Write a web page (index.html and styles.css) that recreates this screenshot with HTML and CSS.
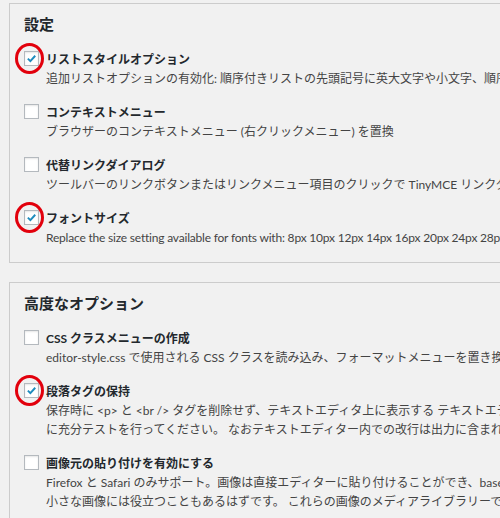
FILE: index.html
```html
<!DOCTYPE html>
<html lang="ja">
<head>
    <meta charset="UTF-8">
    <meta name="viewport" content="width=device-width, initial-scale=1.0">
    <title>TinyMCE Advanced 設定</title>
    <link rel="stylesheet" href="styles.css">
</head>
<body>
    <!-- 設定 -->
    <div class="box">
        <h2>設定</h2>

        <div class="option marked">
            <span class="check on"><svg viewBox="0 0 16 16"><path d="M3.5 8.2 L6.6 11.2 L12.6 4.6"/></svg></span>
            <div class="text">
                <div class="label">リストスタイルオプション</div>
                <div class="desc">追加リストオプションの有効化: 順序付きリストの先頭記号に英大文字や小文字、順序などを設定できます。</div>
            </div>
        </div>

        <div class="option">
            <span class="check"></span>
            <div class="text">
                <div class="label">コンテキストメニュー</div>
                <div class="desc">ブラウザーのコンテキストメニュー (右クリックメニュー) を置換</div>
            </div>
        </div>

        <div class="option">
            <span class="check"></span>
            <div class="text">
                <div class="label">代替リンクダイアログ</div>
                <div class="desc">ツールバーのリンクボタンまたはリンクメニュー項目のクリックで TinyMCE リンクダイアログを開きます。</div>
            </div>
        </div>

        <div class="option marked">
            <span class="check on"><svg viewBox="0 0 16 16"><path d="M3.5 8.2 L6.6 11.2 L12.6 4.6"/></svg></span>
            <div class="text">
                <div class="label">フォントサイズ</div>
                <div class="desc en">Replace the size setting available for fonts with: 8px 10px 12px 14px 16px 20px 24px 28px 32px 36px 48px 60px.</div>
            </div>
        </div>
    </div>

    <!-- 高度なオプション -->
    <div class="box">
        <h2>高度なオプション</h2>

        <div class="option">
            <span class="check"></span>
            <div class="text">
                <div class="label">CSS クラスメニューの作成</div>
                <div class="desc">editor-style.css で使用される CSS クラスを読み込み、フォーマットメニューを置き換えます。</div>
            </div>
        </div>

        <div class="option marked">
            <span class="check on"><svg viewBox="0 0 16 16"><path d="M3.5 8.2 L6.6 11.2 L12.6 4.6"/></svg></span>
            <div class="text">
                <div class="label">段落タグの保持</div>
                <div class="desc">保存時に &lt;p&gt; と &lt;br /&gt; タグを削除せず、テキストエディタ上に表示する テキストエディタに切り替える前<br>に充分テストを行ってください。 なおテキストエディター内での改行は出力に含まれません。</div>
            </div>
        </div>

        <div class="option">
            <span class="check"></span>
            <div class="text">
                <div class="label">画像元の貼り付けを有効にする</div>
                <div class="desc">Firefox と Safari のみサポート。画像は直接エディターに貼り付けることができ、base64 エンコードされます。<br>小さな画像には役立つこともあるはずです。 これらの画像のメディアライブラリーでの管理はできません。</div>
            </div>
        </div>
    </div>
</body>
</html>
```

FILE: styles.css
```css
html, body {
    margin: 0;
    padding: 0;
    background: #f1f1f1;
    overflow: hidden;
}

body {
    font-family: Lato, "Noto Sans CJK JP", sans-serif;
    font-size: 12px;
    color: #444;
    padding-top: 3px;
}

.box {
    width: 700px;
    margin: 0 0 19px 9px;
    padding: 10px 14px 0 14px;
    border: 1px solid #ccc;
    background: #f1f1f1;
}

h2 {
    margin: 0 0 15px 0;
    font-size: 15px;
    line-height: 21px;
    font-weight: bold;
    color: #23282d;
}

.option {
    position: relative;
    display: flex;
    margin-bottom: 15px;
}

.check {
    flex: none;
    box-sizing: border-box;
    width: 15px;
    height: 15px;
    margin: 1px 7px 0 0;
    border: 1px solid #b4b9be;
    background: #fff;
    box-shadow: inset 0 1px 2px rgba(0, 0, 0, 0.1);
}

.check svg {
    display: block;
    width: 13px;
    height: 13px;
}

.check path {
    fill: none;
    stroke: #1e8cbe;
    stroke-width: 2.4;
}

/* red circle drawn around the checked boxes */
.marked::before {
    content: "";
    position: absolute;
    left: -9px;
    top: -7px;
    box-sizing: border-box;
    width: 29px;
    height: 31px;
    border: 3px solid #e2000c;
    border-radius: 50%;
}

.text {
    white-space: nowrap;
}

.label {
    font-weight: bold;
    color: #23282d;
    line-height: 19px;
}

.desc {
    line-height: 19px;
}

.desc.en {
    letter-spacing: -0.2px;
}
```
